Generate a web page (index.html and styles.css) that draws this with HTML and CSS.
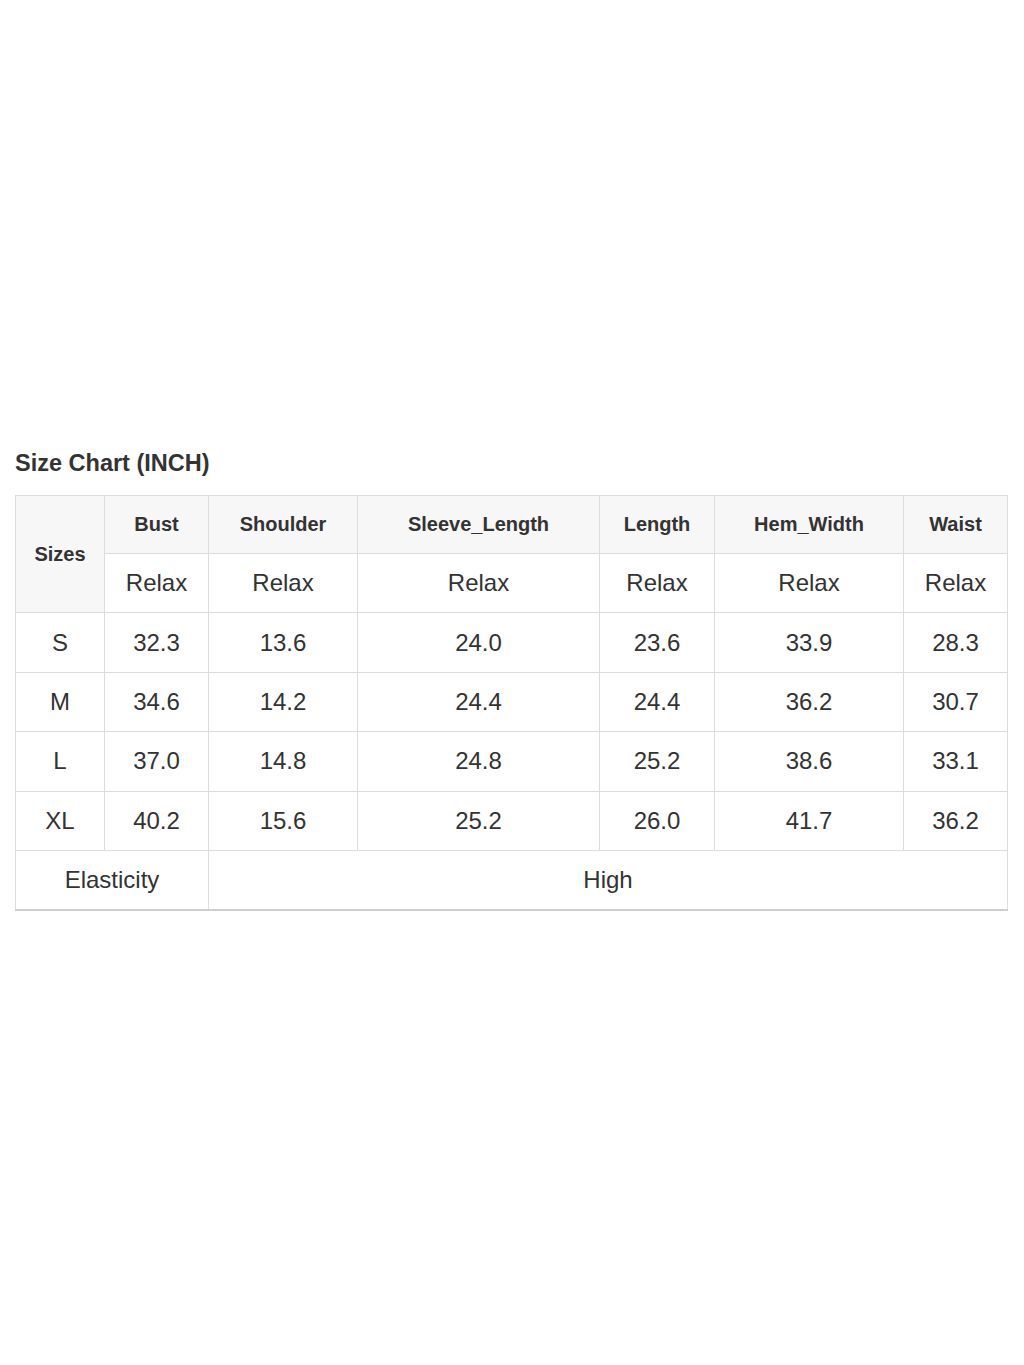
FILE: index.html
```html
<!DOCTYPE html>
<html>
<head>
<meta charset="utf-8">
<link rel="stylesheet" href="styles.css">
</head>
<body>
<div class="page">
  <h2 class="title">Size Chart (INCH)</h2>
  <table class="chart">
    <colgroup>
      <col class="c1"><col class="c2"><col class="c3"><col class="c4"><col class="c5"><col class="c6"><col class="c7">
    </colgroup>
    <thead>
      <tr class="head">
        <th rowspan="2" class="sizes">Sizes</th>
        <th>Bust</th><th>Shoulder</th><th>Sleeve_Length</th><th>Length</th><th>Hem_Width</th><th>Waist</th>
      </tr>
      <tr>
        <td>Relax</td><td>Relax</td><td>Relax</td><td>Relax</td><td>Relax</td><td>Relax</td>
      </tr>
    </thead>
    <tbody>
      <tr><td>S</td><td>32.3</td><td>13.6</td><td>24.0</td><td>23.6</td><td>33.9</td><td>28.3</td></tr>
      <tr><td>M</td><td>34.6</td><td>14.2</td><td>24.4</td><td>24.4</td><td>36.2</td><td>30.7</td></tr>
      <tr><td>L</td><td>37.0</td><td>14.8</td><td>24.8</td><td>25.2</td><td>38.6</td><td>33.1</td></tr>
      <tr><td>XL</td><td>40.2</td><td>15.6</td><td>25.2</td><td>26.0</td><td>41.7</td><td>36.2</td></tr>
      <tr class="last"><td colspan="2">Elasticity</td><td colspan="5">High</td></tr>
    </tbody>
  </table>
</div>
</body>
</html>
```

FILE: styles.css
```css
html, body {
  margin: 0;
  padding: 0;
  background: #ffffff;
}
body {
  font-family: "Liberation Sans", Arial, sans-serif;
  color: #333333;
}
.page {
  padding: 449px 16px 0 15px;
}
.title {
  margin: 0 0 18px 0;
  font-size: 23.5px;
  line-height: 28px;
  font-weight: bold;
  color: #333333;
}
.chart {
  border-collapse: collapse;
  table-layout: fixed;
  width: 993px;
  border-bottom: 2px solid #cfcfcf;
}
.c1 { width: 89px; }
.c2 { width: 104px; }
.c3 { width: 149px; }
.c4 { width: 242px; }
.c5 { width: 115px; }
.c6 { width: 189px; }
.c7 { width: 104px; }
.chart th, .chart td {
  border: 1px solid #dcdcdc;
  text-align: center;
  vertical-align: middle;
  padding: 0;
}
.chart tr {
  height: 59.4px;
}
.chart .head {
  height: 58px;
}
.chart th {
  background: #f7f7f7;
  font-size: 20px;
  font-weight: bold;
  color: #333333;
}
.chart td {
  font-size: 24px;
  color: #333333;
}
.chart .sizes {
  background: #f7f7f7;
}
.chart tr.last td {
  border-bottom: 2px solid #cfcfcf;
}
```
